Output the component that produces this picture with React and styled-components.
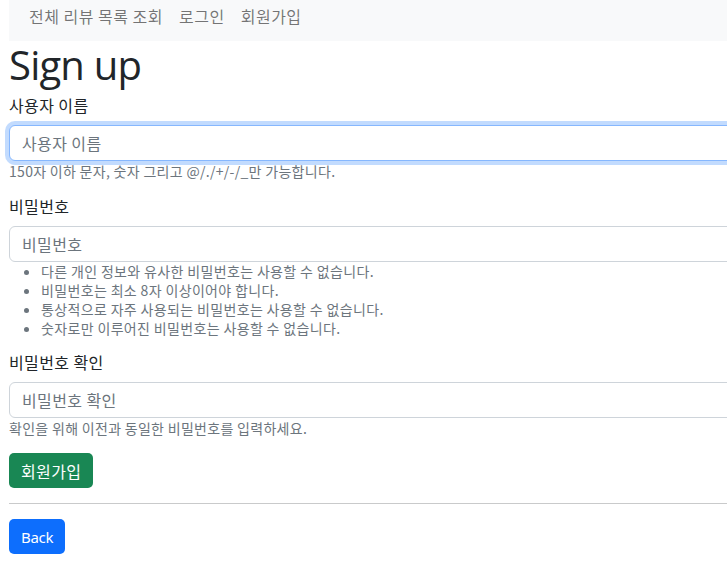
import React from "react";
import styled, { createGlobalStyle } from "styled-components";

const Global = createGlobalStyle`
html, body {
    margin: 0;
    padding: 0;
    background: #fff;
    overflow: hidden;
}
body {
    font-family: "Noto Sans", "Noto Sans CJK KR", sans-serif;
    font-size: 16px;
    color: #212529;
}
`;

const Page = styled.div`
width: 900px;
padding-left: 9px;
`;

const Nav = styled.nav`
background-color: #f8f9fa;
height: 41px;
display: flex;
align-items: center;
padding: 0 12px;
`;

const NavLink = styled.a`
font-family: "Noto Sans CJK KR", sans-serif;
font-size: 16px;
letter-spacing: 0.5px;
color: rgba(0, 0, 0, 0.55);
text-decoration: none;
padding: 0 8px;
margin-top: -10px;
`;

const Title = styled.h1`
font-family: "Open Sans", "Noto Sans", sans-serif;
font-weight: 400;
font-size: 40px;
line-height: 48px;
margin: 0 0 6px 0;
letter-spacing: -0.8px;
`;

const Group = styled.div`
margin-bottom: ${p => p.gap || 0}px;
`;

const Label = styled.label`
display: block;
font-family: "Noto Sans CJK KR", sans-serif;
font-size: 16px;
letter-spacing: 0.4px;
line-height: 20px;
margin-bottom: 10px;
`;

const Input = styled.input`
display: block;
width: 100%;
box-sizing: border-box;
height: 36px;
padding: 0 12px;
font-family: "Noto Sans CJK KR", sans-serif;
font-size: 16px;
letter-spacing: 0.4px;
color: #212529;
background: #fff;
border: 1px solid ${p => p.focused ? "#86b7fe" : "#ced4da"};
border-radius: 6px;
outline: none;
box-shadow: ${p => p.focused ? "0 0 0 4px rgba(13, 110, 253, 0.25)" : "none"};
&::placeholder {
    color: #6c757d;
}
`;

const Help = styled.div`
font-family: "Noto Sans CJK KR", sans-serif;
font-size: 14px;
letter-spacing: 0.3px;
line-height: 19px;
color: #6c757d;
margin-top: 1px;
`;

const Rules = styled.ul`
margin: 0;
padding-left: 32px;
font-family: "Noto Sans CJK KR", sans-serif;
font-size: 14px;
letter-spacing: 0.35px;
line-height: 19px;
color: #6c757d;
`;

const Button = styled.button`
display: block;
font-family: ${p => p.latin ? "\"Noto Sans\", sans-serif" : "\"Noto Sans CJK KR\", sans-serif"};
font-size: ${p => p.latin ? 15 : 16}px;
letter-spacing: ${p => p.latin ? "-0.3px" : "0.4px"};
line-height: 22px;
height: 35px;
padding: 0 12px;
color: #fff;
background-color: ${p => p.variant === "success" ? "#198754" : "#0d6efd"};
border: none;
border-radius: 5px;
`;

const Divider = styled.hr`
margin: 15px 0 15px 0;
border: 0;
border-top: 1px solid #c9cacb;
`;

const App = () => {
    return (
        <Page>
            <Global />
            <Nav>
                <NavLink href="#">전체 리뷰 목록 조회</NavLink>
                <NavLink href="#">로그인</NavLink>
                <NavLink href="#">회원가입</NavLink>
            </Nav>
            <Title>Sign up</Title>
            <Group gap={15}>
                <Label>사용자 이름</Label>
                <Input focused placeholder="사용자 이름" />
                <Help>150자 이하 문자, 숫자 그리고 @/./+/-/_만 가능합니다.</Help>
            </Group>
            <Group gap={14}>
                <Label>비밀번호</Label>
                <Input type="password" placeholder="비밀번호" />
                <Rules>
                    <li>다른 개인 정보와 유사한 비밀번호는 사용할 수 없습니다.</li>
                    <li>비밀번호는 최소 8자 이상이어야 합니다.</li>
                    <li>통상적으로 자주 사용되는 비밀번호는 사용할 수 없습니다.</li>
                    <li>숫자로만 이루어진 비밀번호는 사용할 수 없습니다.</li>
                </Rules>
            </Group>
            <Group gap={15}>
                <Label>비밀번호 확인</Label>
                <Input type="password" placeholder="비밀번호 확인" />
                <Help>확인을 위해 이전과 동일한 비밀번호를 입력하세요.</Help>
            </Group>
            <Button variant="success">회원가입</Button>
            <Divider />
            <Button latin>Back</Button>
        </Page>
    )
}

export default App;
